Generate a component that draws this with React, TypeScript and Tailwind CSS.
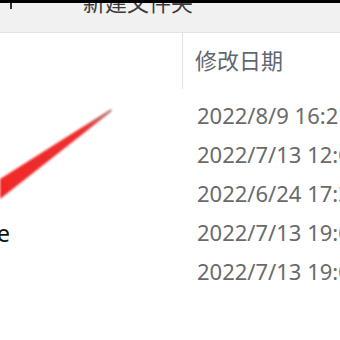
import React from "react";

const dates = [
  "2022/8/9 16:21",
  "2022/7/13 12:05",
  "2022/6/24 17:30",
  "2022/7/13 19:02",
  "2022/7/13 19:02",
];

export default function App() {
  const font = { fontFamily: '"Noto Sans", "Noto Sans CJK SC", sans-serif' };
  return (
    <div className="relative w-[340px] h-[340px] overflow-hidden bg-white" style={font}>
      {/* toolbar */}
      <div className="h-[33px] border-t-[3px] border-black bg-[#f1f1f1] border-b border-b-[#e4e4e4] overflow-hidden flex items-start">
        <div className="w-[83px] shrink-0 relative">
          <div className="absolute left-[10px] top-[-2px] w-[2px] h-[8px] bg-[#333]" />
        </div>
        <span className="text-[22px] leading-[22px] mt-[-12px] text-[#3a3a3a] whitespace-nowrap">新建文件夹</span>
      </div>
      {/* header */}
      <div className="flex h-[62px]">
        <div className="w-[183px] shrink-0 border-r border-[#e2e2e2] mb-[6px]" />
        <div className="pl-[12px] pt-[13px] text-[22px] leading-[28px] text-[#5f6770] whitespace-nowrap">修改日期</div>
      </div>
      {/* rows */}
      <div className="flex flex-col">
        {dates.map((d, i) => (
          <div key={i} className="flex h-[39px] items-center">
            <div className="w-[183px] shrink-0 h-full flex items-center overflow-hidden">
              {i === 3 && (
                <span className="ml-[-3px] text-[23px] leading-none text-[#111] mt-[4px]">e</span>
              )}
            </div>
            <div className="pl-[14px] shrink-0 text-[22px] leading-none text-[#6a6a6a] whitespace-nowrap">{d}</div>
          </div>
        ))}
      </div>
      {/* red annotation arrow */}
      <svg className="absolute left-0 top-0" width="340" height="340" viewBox="0 0 340 340">
        <defs>
          <linearGradient id="ar" x1="0" y1="190" x2="112" y2="110" gradientUnits="userSpaceOnUse">
            <stop offset="0" stopColor="#f02828" />
            <stop offset="0.75" stopColor="#ee3030" />
            <stop offset="1" stopColor="#b08080" />
          </linearGradient>
          <filter id="bl"><feGaussianBlur stdDeviation="0.8" /></filter>
        </defs>
        <polygon points="111,109 112,111 0,199 0,179" fill="url(#ar)" filter="url(#bl)" />
      </svg>
    </div>
  );
}
